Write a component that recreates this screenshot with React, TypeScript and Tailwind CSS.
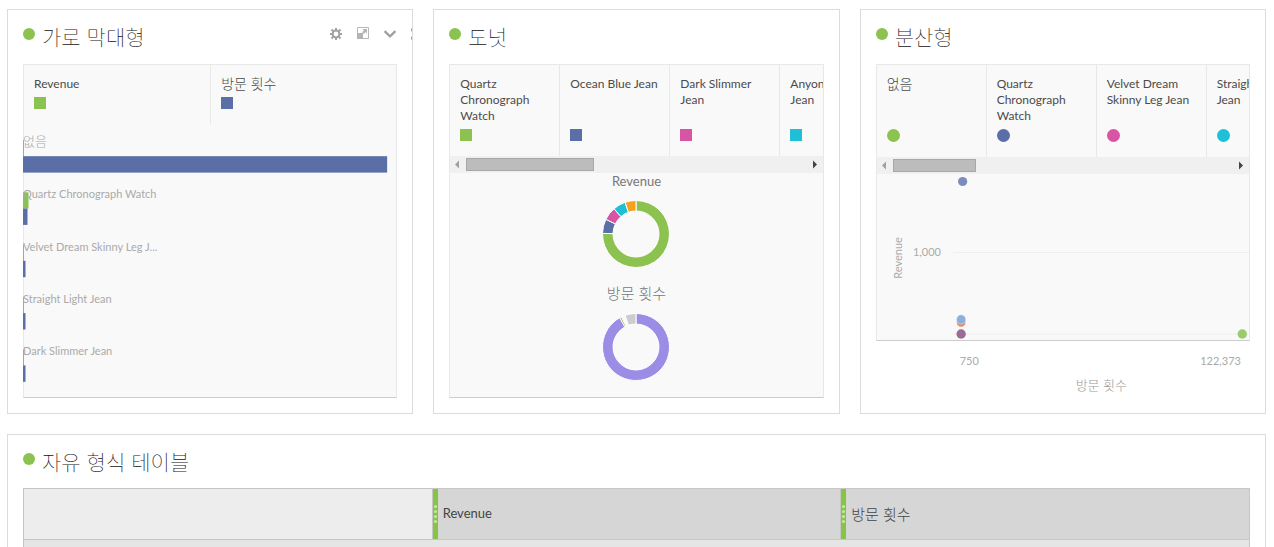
import type { ReactNode } from "react";

const GREEN = "#8cc350";
const BLUE = "#5a6ea8";
const PINK = "#d854a4";
const CYAN = "#1fbfd8";
const ORANGE = "#f5a01e";

function PanelTitle({ children, tools, compact }: { children: ReactNode; tools?: ReactNode; compact?: boolean }) {
  return (
    <header className={`flex items-start justify-between ${compact ? "h-[53px]" : "h-[54px]"}`}>
      <div className="flex items-start gap-[7px]">
        <span className="mt-[18px] size-3 rounded-full bg-[#8cc350]" />
        <h2 className="mt-[11px] text-[21px] leading-8 font-thin whitespace-nowrap text-[#111]">{children}</h2>
      </div>
      {tools}
    </header>
  );
}

function Panel({ title, tools, children }: { title: string; tools?: ReactNode; children: ReactNode }) {
  return (
    <section className="min-w-0 overflow-hidden border border-[#dcdcdc] bg-white px-[15px] pb-[15px]">
      <PanelTitle tools={tools}>{title}</PanelTitle>
      {children}
    </section>
  );
}

function Toolbar() {
  return (
    <div className="mt-[18px] -mr-[26px] flex shrink-0 gap-[15px] text-[#a0a0a0]">
      <button type="button" aria-label="설정" className="size-3">
        <svg viewBox="0 0 12 12" className="size-3" fill="none" stroke="currentColor">
          <circle cx="6" cy="6" r="3.4" strokeWidth="2" />
          <path
            d="M6 0v2M6 10v2M0 6h2M10 6h2M1.5 1.5l1.7 1.7M8.8 8.8l1.7 1.7M10.5 1.5L8.8 3.2M3.2 8.8l-1.7 1.7"
            strokeWidth="2"
          />
        </svg>
      </button>
      <button type="button" aria-label="크기 조정" className="-mt-px size-3">
        <svg viewBox="0 0 12 12" className="size-3">
          <path d="M.5.5h11v11H.5z" fill="#fff" stroke="#b8b8b8" />
          <path d="M0 6h6v6H0zM5.5 2H10v4.5L8.6 5.1 6.8 6.9 5.2 5.3 7 3.5z" fill="#b4b4b4" />
        </svg>
      </button>
      <button type="button" aria-label="접기" className="size-3">
        <svg viewBox="0 0 12 12" className="size-3 overflow-visible" fill="none" stroke="currentColor" strokeWidth="2.3">
          <path d="M.6 3.2L6 8.4l5.4-5.2" />
        </svg>
      </button>
      <button type="button" aria-label="닫기" className="size-3">
        <svg viewBox="0 0 12 12" className="size-3" fill="none" stroke="currentColor" strokeWidth="2.6">
          <path d="M0 1l11 10M11 1L0 11" />
        </svg>
      </button>
    </div>
  );
}

type LegendItem = { label: string; swatch: string; korean?: boolean };

function ScrollLegend({ items, round, thumb }: { items: LegendItem[]; round?: boolean; thumb: string }) {
  return (
    <div className="overflow-hidden">
      <ul className={`flex overflow-hidden ${round ? "h-[92px]" : "h-[91px]"}`}>
        {items.map((item) => (
          <li
            key={item.label}
            className="flex w-[110px] shrink-0 flex-col justify-between border-r border-[#e8e8e8] pt-[11px] pr-1 pb-[15px] pl-[10px] text-xs leading-4 whitespace-pre-line text-[#4b4b4b]"
          >
            <span className={item.korean ? "text-sm leading-4 font-light" : ""}>{item.label}</span>
            <span className={`${round ? "size-[13px] rounded-full" : "size-3"} shrink-0 ${item.swatch}`} />
          </li>
        ))}
      </ul>
      <div className="flex h-[17px] items-center bg-[#f0f0f0]">
        <svg viewBox="0 0 16 17" className="h-[17px] w-4 shrink-0">
          <path d="M5 8.5l4-4v8z" fill="#a0a0a0" />
        </svg>
        <div className="flex-1">
          <div className={`h-[13px] border border-[#a8a8a8] bg-[#bcbcbc] ${thumb}`} />
        </div>
        <svg viewBox="0 0 16 17" className="h-[17px] w-4 shrink-0">
          <path d="M10 8.5l-4-4v8z" fill="#444" />
        </svg>
      </div>
    </div>
  );
}

const bars = [
  { label: "없음", green: "1", blue: "97.8%", size: 13 },
  { label: "Quartz Chronograph Watch", green: "5.5", blue: "4.5", size: 11 },
  { label: "Velvet Dream Skinny Leg J...", green: "1", blue: "2.5", size: 11 },
  { label: "Straight Light Jean", green: "1", blue: "2.5", size: 11 },
  { label: "Dark Slimmer Jean", green: "1", blue: "2.5", size: 11 },
];

function BarPanel() {
  return (
    <Panel title="가로 막대형" tools={<Toolbar />}>
      <div className="border border-[#e8e8e8] border-b-[#ccc] bg-[#f9f9f9]">
        <ul className="grid h-[59px] grid-cols-2 text-xs leading-4 text-[#4b4b4b]">
          <li className="flex flex-col gap-[5px] pt-[11px] pl-[10px]">
            <span>Revenue</span>
            <span className="size-3 bg-[#8cc350]" />
          </li>
          <li className="flex flex-col gap-[5px] border-l border-[#e8e8e8] pt-[11px] pl-[10px]">
            <span className="text-sm leading-4 font-light">방문 횟수</span>
            <span className="size-3 bg-[#5a6ea8]" />
          </li>
        </ul>
        <svg className="block h-[273px] w-full overflow-visible">
          {bars.map((bar, i) => {
            const y = 16 + i * 52.3;
            return (
              <g key={bar.label}>
                <rect x="-1" y={y} width={bar.green} height="16.2" fill={GREEN} />
                <rect x="-1" y={y + 16.2} width={bar.blue} height="16.4" fill={BLUE} />
                <text x="-1" y={y + 6} fontSize={bar.size} fontWeight={i === 0 ? 300 : 400} fill="#aaa">
                  {bar.label}
                </text>
              </g>
            );
          })}
        </svg>
      </div>
    </Panel>
  );
}

function arc(from: number, to: number) {
  const point = (deg: number, r: number) => {
    const a = ((deg - 90) * Math.PI) / 180;
    return `${(34 + r * Math.cos(a)).toFixed(2)} ${(34 + r * Math.sin(a)).toFixed(2)}`;
  };
  const large = to - from > 180 ? 1 : 0;
  return `M${point(from, 33.5)}A33.5 33.5 0 ${large} 1 ${point(to, 33.5)}L${point(to, 23)}A23 23 0 ${large} 0 ${point(from, 23)}Z`;
}

type Slice = { from: number; to: number; color: string };

function Donut({ slices }: { slices: Slice[] }) {
  return (
    <svg viewBox="0 0 68 68" className="size-[68px]">
      {slices.map((s) => (
        <path key={s.from} d={arc(s.from, s.to)} fill={s.color} stroke="#fff" strokeWidth="1" />
      ))}
    </svg>
  );
}

const revenueSlices: Slice[] = [
  { from: 0, to: 271, color: GREEN },
  { from: 271, to: 296, color: BLUE },
  { from: 296, to: 319, color: PINK },
  { from: 319, to: 341, color: CYAN },
  { from: 341, to: 360, color: ORANGE },
];

const visitSlices: Slice[] = [
  { from: 0, to: 331, color: "#9b8ce6" },
  { from: 331, to: 334.5, color: GREEN },
  { from: 334.5, to: 336.5, color: "#d8cfc0" },
  { from: 336.5, to: 338.5, color: "#c9dfe6" },
  { from: 338.5, to: 341, color: "#e6e2d0" },
  { from: 341, to: 360, color: "#ccc" },
];

function DonutPanel() {
  return (
    <Panel title="도넛">
      <div className="flex h-[334px] flex-col border border-[#e8e8e8] border-b-[#ccc] bg-[#f9f9f9]">
        <ScrollLegend
          thumb="w-[128px]"
          items={[
            { label: "Quartz Chronograph Watch", swatch: "bg-[#8cc350]" },
            { label: "Ocean Blue Jean", swatch: "bg-[#5a6ea8]" },
            { label: "Dark Slimmer Jean", swatch: "bg-[#d854a4]" },
            { label: "Anyone\nJean", swatch: "bg-[#1fbfd8]" },
          ]}
        />
        <div className="flex flex-col items-center text-[13px] leading-4 text-[#777]">
          <span className="mb-[11px]">Revenue</span>
          <Donut slices={revenueSlices} />
          <span className="mt-[17px] mb-3 text-[15px] font-light">방문 횟수</span>
          <Donut slices={visitSlices} />
        </div>
      </div>
    </Panel>
  );
}

function ScatterPanel() {
  return (
    <Panel title="분산형">
      <div className="border border-[#e8e8e8] border-b-[#ccc] bg-[#f9f9f9]">
        <ScrollLegend
          round
          thumb="w-[83px]"
          items={[
            { label: "없음", swatch: "bg-[#8cc350]", korean: true },
            { label: "Quartz Chronograph Watch", swatch: "bg-[#5a6ea8]" },
            { label: "Velvet Dream Skinny Leg Jean", swatch: "bg-[#d854a4]" },
            { label: "Straight\nJean", swatch: "bg-[#1fbfd8]" },
          ]}
        />
        <svg className="block h-[166px] w-full" fontSize="11" fill="#aaa">
          <svg x="76" width="100%" height="166" overflow="visible">
            <path d="M0 78.5h296M0 160h296" stroke="#eee" />
          </svg>
          <text x="64" y="82" textAnchor="end">
            1,000
          </text>
          <text transform="translate(25 84) rotate(-90)" textAnchor="middle">
            Revenue
          </text>
          <circle cx="23%" cy="7.5" r="4.6" fill="#7a8bbf" />
          <circle cx="22.6%" cy="148.5" r="4.6" fill="#e08a62" stroke="#fff" strokeWidth=".6" />
          <circle cx="22.6%" cy="145.5" r="4.7" fill="#8bb0e0" stroke="#fff" strokeWidth=".4" />
          <circle cx="22.6%" cy="160" r="4.7" fill="#9b6b98" />
          <circle cx="98.1%" cy="160" r="4.7" fill="#9ccc6a" />
        </svg>
      </div>
      <div className="flex justify-between pt-3 pr-[9px] pl-[84px] text-[11px] leading-4 text-[#aaa]">
        <span>750</span>
        <span>122,373</span>
      </div>
      <p className="pt-2 pl-[77px] text-center text-[13px] leading-4 font-light text-[#999]">방문 횟수</p>
    </Panel>
  );
}

function ColumnHead({ children }: { children: ReactNode }) {
  return (
    <th scope="col" className="border-y border-l border-[#c6c6c6] bg-[#d6d6d6] p-0 text-left font-normal">
      <div className="flex h-[50px] items-center gap-[5px]">
        <span className="flex h-full w-[5px] flex-col items-center justify-center gap-[2px] bg-[#86c540]">
          <i className="size-[3px] rounded-full bg-[#c8e8a8]" />
          <i className="size-[3px] rounded-full bg-[#c8e8a8]" />
          <i className="size-[3px] rounded-full bg-[#c8e8a8]" />
          <i className="size-[3px] rounded-full bg-[#c8e8a8]" />
        </span>
        {children}
      </div>
    </th>
  );
}

export default function App() {
  return (
    <main className="flex h-screen flex-col gap-5 overflow-hidden bg-white pt-[9px] pr-2 pl-[7px] font-['Lato','Noto_Sans_CJK_KR',sans-serif]">
      <div className="grid shrink-0 grid-cols-3 gap-5">
        <BarPanel />
        <DonutPanel />
        <ScatterPanel />
      </div>
      <section className="min-h-0 flex-1 overflow-hidden border border-b-0 border-[#dcdcdc] px-[15px]">
        <PanelTitle compact>자유 형식 테이블</PanelTitle>
        <table className="w-full table-fixed border-separate border-spacing-0 border-r border-[#c6c6c6] text-[13px] text-[#444]">
          <thead>
            <tr>
              <td className="border-y border-l border-[#c6c6c6] bg-[#ededed]" />
              <ColumnHead>Revenue</ColumnHead>
              <ColumnHead>
                <span className="text-[15px] font-light">방문 횟수</span>
              </ColumnHead>
            </tr>
          </thead>
          <tbody>
            <tr>
              <td colSpan={3} className="h-10 border-l border-[#c6c6c6] bg-[#e5e5e5]" />
            </tr>
          </tbody>
        </table>
      </section>
    </main>
  );
}
